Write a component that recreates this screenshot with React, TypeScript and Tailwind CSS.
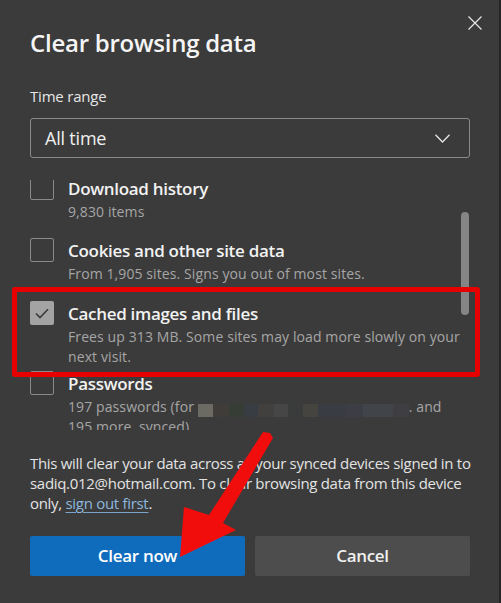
import React from "react";

const font = { fontFamily: '"Open Sans", "Noto Sans", sans-serif' };

function Checkbox({ checked }: { checked?: boolean }) {
  if (checked) {
    return (
      <div className="w-[24px] h-[24px] shrink-0 rounded-[2px] bg-[#a3a3a3] flex items-center justify-center">
        <svg width="14" height="11" viewBox="0 0 14 11" fill="none">
          <path d="M1 5.5 L5 9.5 L13 1.2" stroke="#3b3b3b" strokeWidth="1.6" />
        </svg>
      </div>
    );
  }
  return <div className="w-[24px] h-[24px] shrink-0 rounded-[2px] border border-[#8a8a8a]" />;
}

function Row({
  h,
  title,
  children,
  checked,
}: {
  h: string;
  title: string;
  children: React.ReactNode;
  checked?: boolean;
}) {
  return (
    <div className={`flex gap-[14px] ${h}`}>
      <Checkbox checked={checked} />
      <div className="flex flex-col">
        <div className="text-[17px] leading-[26px] font-semibold text-[#f2f2f2] tracking-[-0.3px]">{title}</div>
        <div className="text-[14px] leading-[20px] text-[#a6a6a6] tracking-[0.1px]">{children}</div>
      </div>
    </div>
  );
}

const blurColors = [
  ["#6b6b63", 15],
  ["#3f3c3a", 16],
  ["#353d35", 15],
  ["#383c43", 14],
  ["#42403e", 16],
  ["#464646", 14],
  ["#393c3a", 15],
  ["#45443f", 15],
  ["#393d43", 28],
  ["#3d3d45", 17],
  ["#414448", 30],
  ["#3e3e43", 16],
] as const;

export default function App() {
  return (
    <div
      className="relative w-[501px] h-[603px] bg-[#3b3b3b] overflow-hidden border-r-2 border-[#262626]"
      style={font}
    >
      {/* close */}
      <svg className="absolute left-[468px] top-[16px]" width="14" height="14" viewBox="0 0 14 14">
        <path d="M0.5 0.5 L13.5 13.5 M13.5 0.5 L0.5 13.5" stroke="#e8e8e8" strokeWidth="1.2" />
      </svg>

      <div className="pl-[30px] pr-[29px] flex flex-col">
        <div className="mt-[27px] text-[24px] leading-[32px] font-semibold text-[#f5f5f5] tracking-[-0.25px]">
          Clear browsing data
        </div>
        <div className="mt-[27px] text-[15px] leading-[20px] text-[#e6e6e6] tracking-[-0.2px]">Time range</div>
        <div className="mt-[12px] h-[40px] border border-[#8a8a8a] rounded-[3px] flex items-center justify-between pl-[14px] pr-[19px]">
          <span className="text-[18px] text-[#f0f0f0] tracking-[-0.2px]">All time</span>
          <svg width="15" height="9" viewBox="0 0 15 9" fill="none">
            <path d="M0.5 0.8 L7.5 8 L14.5 0.8" stroke="#e6e6e6" strokeWidth="1.3" />
          </svg>
        </div>

        {/* scroll list */}
        <div className="relative mt-[22px] h-[250px] overflow-hidden">
          <div className="-mt-[4px] flex flex-col pr-[6px]">
            <Row h="h-[62px]" title="Download history">
              9,830 items
            </Row>
            <Row h="h-[63px]" title="Cookies and other site data">
              From 1,905 sites. Signs you out of most sites.
            </Row>
            <Row h="h-[70px]" title="Cached images and files" checked>
              Frees up 313 MB. Some sites may load more slowly on your
              <br />
              next visit.
            </Row>
            <Row h="h-[80px]" title="Passwords">
              197 passwords (for{" "}
              <span className="inline-flex h-[13px] align-[-5px]">
                {blurColors.map(([c, w], i) => (
                  <span key={i} className="h-full inline-block" style={{ backgroundColor: c, width: w }} />
                ))}
              </span>
              . and
              <br />
              195 more, synced)
            </Row>
          </div>
          <div className="absolute right-[1px] top-[32px] w-[8px] h-[103px] rounded-full bg-[#858585]" />
        </div>

        <div className="mt-[23px] text-[15px] leading-[20px] text-[#e3e3e3] tracking-[-0.3px] whitespace-nowrap">
          This will clear your data across all your synced devices signed in to
          <br />
          sadiq.012@hotmail.com. To clear browsing data from this device
          <br />
          only,{" "}
          <span className="text-[#8cb8de] underline decoration-[#7aa6cc] underline-offset-[3px]">sign out first</span>.
        </div>

        <div className="mt-[23px] flex gap-[10px]">
          <button className="flex-1 h-[40px] bg-[#0f6cbd] rounded-[2px] text-white text-[17px] font-semibold tracking-[-0.3px]">
            Clear now
          </button>
          <button className="flex-1 h-[40px] bg-[#4d4d4d] rounded-[2px] text-[#f0f0f0] text-[17px] font-semibold tracking-[-0.3px]">
            Cancel
          </button>
        </div>
      </div>

      {/* red highlight */}
      <div className="absolute left-[12px] top-[287px] w-[468px] h-[90px] border-[5px] border-[#e60000] rounded-[3px]" />

      {/* arrow */}
      <svg className="absolute left-0 top-0" width="501" height="603" viewBox="0 0 501 603">
        <polygon
          points="180,557 184,507 209,515 263,432 270,433 273,438 223,523 236,530"
          fill="#f20d0d"
        />
      </svg>
    </div>
  );
}
